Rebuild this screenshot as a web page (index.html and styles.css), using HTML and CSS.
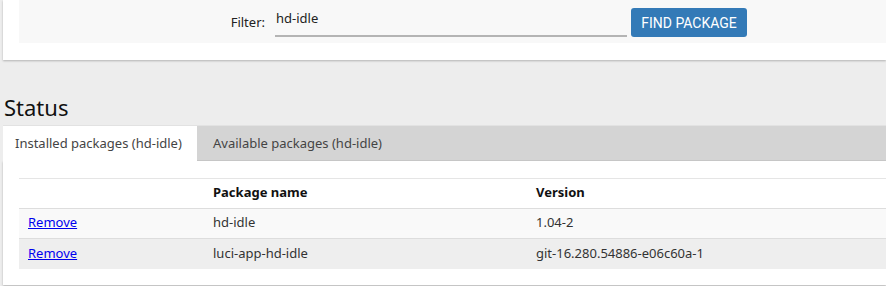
FILE: index.html
```html
<!DOCTYPE html>
<html>
<head>
<meta charset="utf-8">
<link rel="stylesheet" href="styles.css">
</head>
<body>
<div class="card top-card">
  <div class="filterbox">
    <label class="filter-label">Filter:</label>
    <div class="filter-input">hd-idle</div>
    <button class="btn">FIND PACKAGE</button>
  </div>
</div>
<h2 class="status">Status</h2>
<ul class="tabs">
  <li class="tab active">Installed packages (hd-idle)</li>
  <li class="tab">Available packages (hd-idle)</li>
</ul>
<div class="card table-card">
  <div class="table">
    <div class="row head">
      <div class="cell"></div>
      <div class="cell">Package name</div>
      <div class="cell">Version</div>
    </div>
    <div class="row odd">
      <div class="cell"><a href="#">Remove</a></div>
      <div class="cell">hd-idle</div>
      <div class="cell">1.04-2</div>
    </div>
    <div class="row even">
      <div class="cell"><a href="#">Remove</a></div>
      <div class="cell">luci-app-hd-idle</div>
      <div class="cell">git-16.280.54886-e06c60a-1</div>
    </div>
  </div>
</div>
</body>
</html>
```

FILE: styles.css
```css
html, body {
  margin: 0;
  padding: 0;
}
body {
  background: #ededed;
  font-family: "Noto Sans", "Open Sans", sans-serif;
  font-size: 13px;
  color: #333;
  overflow: hidden;
  width: 886px;
  height: 286px;
}
.card {
  background: #fff;
  margin-left: 3px;
  box-shadow: 0 1px 2px rgba(0, 0, 0, 0.25);
}
.top-card {
  padding: 0 0 17px 16px;
}
.filterbox {
  background: #f8f8f8;
  height: 43px;
  display: flex;
  align-items: flex-start;
}
.filter-label {
  width: 246px;
  text-align: right;
  padding-top: 13px;
  color: #222;
}
.filter-input {
  margin-left: 10px;
  width: 352px;
  height: 29px;
  margin-top: 8px;
  border-bottom: 2px solid #b4b4b4;
  line-height: 20px;
  padding-left: 1px;
  box-sizing: border-box;
  color: #222;
}
.btn {
  margin-left: 4px;
  margin-top: 8px;
  width: 116px;
  height: 29px;
  background: #337ab7;
  color: #fff;
  border: none;
  border-radius: 3px;
  font-family: Roboto, "Liberation Sans", sans-serif;
  font-size: 14px;
  padding: 0;
}
.status {
  margin: 30px 0 0 4px;
  font-weight: normal;
  font-size: 22px;
  line-height: 35px;
  color: #111;
  height: 35px;
}
.tabs {
  list-style: none;
  margin: 0 0 0 3px;
  padding: 0;
  display: flex;
  background: #d4d4d4;
  border-top: 1px solid #e2e2e2;
  border-bottom: 1px solid #cacaca;
  height: 34px;
}
.tab {
  line-height: 34px;
  padding: 0 16px;
  color: #444;
}
.tab.active {
  background: #fff;
  width: 194px;
  box-sizing: border-box;
  padding: 0 12px;
  height: 35px;
}
.table-card {
  padding: 17px 0 16px 16px;
}
.table {
  border-top: 1px solid #e5e5e5;
}
.row {
  display: grid;
  grid-template-columns: 185px 323px 1fr;
  height: 29px;
  align-items: center;
  border-bottom: 1px solid #ddd;
}
.row.even {
  border-bottom: none;
  background: #eee;
  height: 30px;
}
.row.odd {
  background: #f9f9f9;
}
.row.head {
  font-weight: bold;
  color: #111;
}
.cell {
  padding: 0 0 3px 9px;
}
a {
  color: #0000ee;
}
```
